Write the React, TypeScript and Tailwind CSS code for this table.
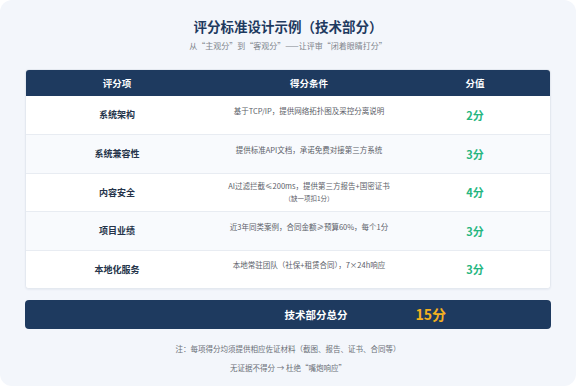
const font = { fontFamily: '"Noto Sans CJK SC", "Noto Sans", sans-serif' }

interface Row {
  item: string
  condition: string
  note?: string
  score: string
}

const rows: Row[] = [
  { item: '系统架构', condition: '基于TCP/IP，提供网络拓扑图及采控分离说明', score: '2分' },
  { item: '系统兼容性', condition: '提供标准API文档，承诺免费对接第三方系统', score: '3分' },
  {
    item: '内容安全',
    condition: 'AI过滤拦截≤200ms，提供第三方报告+国密证书',
    note: '（缺一项扣1分）',
    score: '4分',
  },
  { item: '项目业绩', condition: '近3年同类案例，合同金额≥预算60%，每个1分', score: '3分' },
  { item: '本地化服务', condition: '本地常驻团队（社保+租赁合同），7×24h响应', score: '3分' },
]

export default function App() {
  return (
    <div className="w-[576px] h-[386px] bg-white" style={font}>
      <div className="w-full h-full rounded-[12px] bg-[#f3f6fb] px-[25px] pt-[15px]">
        {/* Title */}
        <div className="text-center">
          <h1 className="text-[13.5px] leading-[22px] font-bold text-[#1e3a5f]">
            评分标准设计示例（技术部分）
          </h1>
          <p className="mt-[2px] text-[8px] leading-[14px] text-[#80858c]">
            从“主观分”到“客观分”——让评审“闭着眼睛打分”
          </p>
        </div>

        {/* Table */}
        <div className="mt-[16px] rounded-[4px] border border-[#e4e9f0] bg-white shadow-[0_1px_2px_rgba(30,58,95,0.06)] overflow-hidden">
          <div className="grid grid-cols-[182px_202px_1fr] h-[26px] items-center bg-[#1e3a5f] text-white text-[9.5px] font-bold">
            <div className="text-center">评分项</div>
            <div className="text-center">得分条件</div>
            <div className="text-center pr-[10px]">分值</div>
          </div>
          {rows.map((row, i) => (
            <div
              key={row.item}
              className={`grid grid-cols-[182px_202px_1fr] h-[38.4px] items-center ${
                i > 0 ? 'border-t border-[#e8ecf2]' : ''
              } ${i % 2 === 1 ? 'bg-[#f8fafd]' : 'bg-white'}`}
            >
              <div className="text-center text-[9px] font-bold text-[#25344a]">{row.item}</div>
              <div className="text-center text-[#5b6068]">
                <div className={`text-[7.5px] leading-[12px] ${row.note ? '' : 'mb-[8px]'}`}>
                  {row.condition}
                </div>
                {row.note && <div className="text-[6.5px] leading-[12px]">{row.note}</div>}
              </div>
              <div className="text-center pr-[10px] text-[11px] font-bold text-[#26b67f]">{row.score}</div>
            </div>
          ))}
        </div>

        {/* Total */}
        <div className="mt-[11px] h-[29px] rounded-[4px] bg-[#1e3a5f] flex items-center justify-end pr-[105px] gap-[68px]">
          <span className="text-[10.5px] font-bold text-white">技术部分总分</span>
          <span className="text-[14px] font-bold text-[#f5b120]">15分</span>
        </div>

        {/* Notes */}
        <div className="mt-[10px] text-center text-[7.5px] leading-[19px] text-[#6b7078]">
          <p>注：每项得分均须提供相应佐证材料（截图、报告、证书、合同等）</p>
          <p>无证据不得分 → 杜绝“嘴炮响应”</p>
        </div>
      </div>
    </div>
  )
}
